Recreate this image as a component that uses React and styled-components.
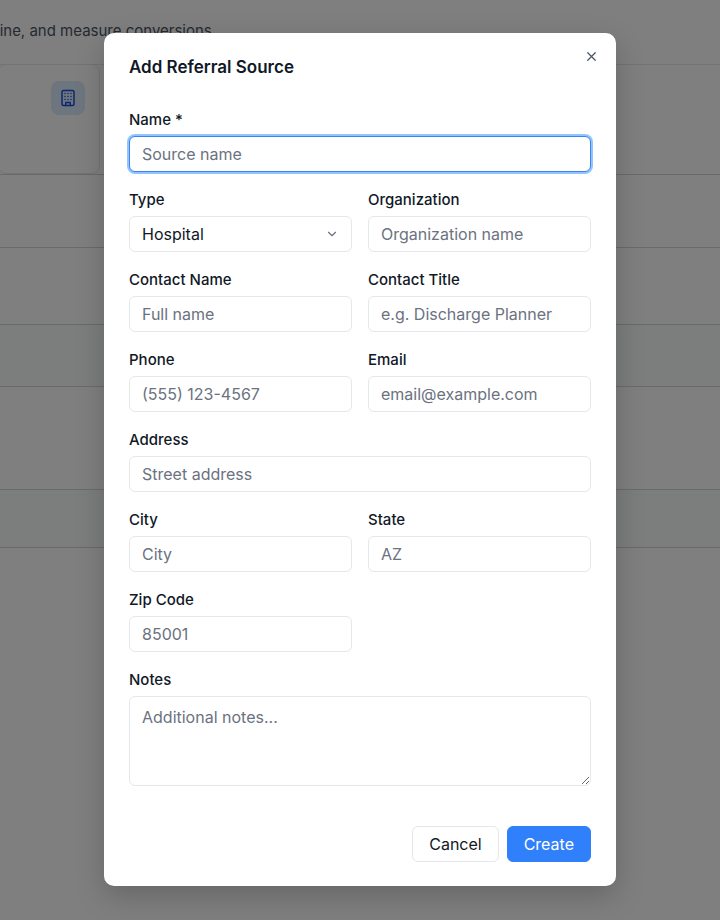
import React from "react"
import styled, { createGlobalStyle } from "styled-components"

const Global = createGlobalStyle`
  html, body { margin: 0; padding: 0; }
  body { font-family: Inter, "Noto Sans", sans-serif; background: #fff; width: 720px; height: 920px; overflow: hidden; }
`

const Page = styled.div`
  position: relative;
  width: 720px;
  height: 920px;
  background: #fff;
`

const Subtitle = styled.div`
  padding: 21px 0 0 0;
  margin-left: -4px;
  font-size: 15px;
  color: #4b5563;
  height: 65px;
  box-sizing: border-box;
  border-bottom: 1px solid #e5e7eb;
`

const BgRow = styled.div`
  height: ${(p) => p.$h}px;
  border-top: 1px solid #d1d5db;
  background: ${(p) => (p.$shade ? "#f9fafb" : "#fff")};
  box-sizing: border-box;
`

const BgCard = styled.div`
  width: 100px;
  height: 108px;
  margin-left: -2px;
  margin-top: -1px;
  border: 1px solid #e5e7eb;
  border-radius: 8px;
  position: relative;
`

const IconBox = styled.div`
  position: absolute;
  left: 52px;
  top: 16px;
  width: 34px;
  height: 34px;
  border-radius: 8px;
  background: #dbeafe;
  display: flex;
  align-items: center;
  justify-content: center;
  color: #1d4ed8;
`

const Overlay = styled.div`
  position: absolute;
  inset: 0;
  background: rgba(0, 0, 0, 0.5);
`

const Modal = styled.div`
  position: absolute;
  left: 104px;
  top: 33px;
  width: 512px;
  box-sizing: border-box;
  background: #fff;
  border-radius: 10px;
  padding: 24px 25px;
  box-shadow: 0 10px 30px rgba(0, 0, 0, 0.2);
`

const Title = styled.h2`
  margin: 0;
  font-size: 17px;
  font-weight: 600;
  color: #111827;
  line-height: 20px;
`

const Close = styled.button`
  position: absolute;
  right: 17px;
  top: 16px;
  background: none;
  border: none;
  padding: 0;
  color: #4b5563;
  display: flex;
`

const Form = styled.div`
  display: grid;
  grid-template-columns: minmax(0, 1fr) minmax(0, 1fr);
  column-gap: 16px;
  row-gap: 18px;
  margin-top: 33px;
`

const Field = styled.div`
  display: flex;
  flex-direction: column;
  gap: 6px;
  min-width: 0;
  grid-column: ${(p) => (p.$wide ? "1 / span 2" : "auto")};
`

const Label = styled.label`
  font-size: 15px;
  font-weight: 450;
  color: #111827;
  line-height: 20px;
`

const Input = styled.input`
  width: 100%;
  height: 36px;
  box-sizing: border-box;
  border: 1px solid ${(p) => (p.$focus ? "#3b82f6" : "#e5e7eb")};
  box-shadow: ${(p) => (p.$focus ? "0 0 0 2px #93c5fd" : "none")};
  border-radius: 6px;
  padding: 0 12px;
  font-family: inherit;
  font-size: 16px;
  color: #111827;
  outline: none;
  &::placeholder { color: #6b7280; }
`

const SelectBox = styled.div`
  height: 36px;
  box-sizing: border-box;
  border: 1px solid #e5e7eb;
  border-radius: 6px;
  padding: 0 12px;
  display: flex;
  align-items: center;
  justify-content: space-between;
  font-size: 16px;
  color: #111827;
`

const TextArea = styled.textarea`
  width: 100%;
  height: 90px;
  box-sizing: border-box;
  border: 1px solid #e5e7eb;
  border-radius: 6px;
  padding: 10px 12px;
  font-family: inherit;
  font-size: 16px;
  resize: vertical;
  outline: none;
  &::placeholder { color: #6b7280; }
`

const Footer = styled.div`
  display: flex;
  justify-content: flex-end;
  gap: 8px;
  margin-top: 40px;
`

const Button = styled.button`
  height: 36px;
  box-sizing: border-box;
  padding: 0 16px;
  border-radius: 6px;
  font-family: inherit;
  font-size: 16px;
  border: 1px solid ${(p) => (p.$primary ? "#2f80fa" : "#e5e7eb")};
  background: ${(p) => (p.$primary ? "#2f80fa" : "#fff")};
  color: ${(p) => (p.$primary ? "#fff" : "#111827")};
`

const Building = () => (
  <svg width="18" height="18" viewBox="0 0 24 24" fill="none" stroke="currentColor" strokeWidth="2" strokeLinecap="round" strokeLinejoin="round">
    <rect x="4" y="2" width="16" height="20" rx="2" />
    <path d="M9 22v-4h6v4M8 6h.01M16 6h.01M12 6h.01M12 10h.01M12 14h.01M16 10h.01M16 14h.01M8 10h.01M8 14h.01" />
  </svg>
)

const App = () => (
  <Page>
    <Global />
    <Subtitle>line, and measure conversions</Subtitle>
    <BgCard>
      <IconBox><Building /></IconBox>
    </BgCard>
    <BgRow $h={73} />
    <BgRow $h={77} />
    <BgRow $h={62} $shade />
    <BgRow $h={103} />
    <BgRow $h={58} $shade />
    <BgRow $h={370} />
    <Overlay />
    <Modal>
      <Close>
        <svg width="15" height="15" viewBox="0 0 24 24" fill="none" stroke="currentColor" strokeWidth="2" strokeLinecap="round">
          <path d="M18 6 6 18M6 6l12 12" />
        </svg>
      </Close>
      <Title>Add Referral Source</Title>
      <Form>
        <Field $wide>
          <Label>Name *</Label>
          <Input $focus placeholder="Source name" />
        </Field>
        <Field>
          <Label>Type</Label>
          <SelectBox>
            Hospital
            <svg width="14" height="14" viewBox="0 0 24 24" fill="none" stroke="#6b7280" strokeWidth="2" strokeLinecap="round" strokeLinejoin="round">
              <path d="m6 9 6 6 6-6" />
            </svg>
          </SelectBox>
        </Field>
        <Field>
          <Label>Organization</Label>
          <Input placeholder="Organization name" />
        </Field>
        <Field>
          <Label>Contact Name</Label>
          <Input placeholder="Full name" />
        </Field>
        <Field>
          <Label>Contact Title</Label>
          <Input placeholder="e.g. Discharge Planner" />
        </Field>
        <Field>
          <Label>Phone</Label>
          <Input placeholder="(555) 123-4567" />
        </Field>
        <Field>
          <Label>Email</Label>
          <Input placeholder="email@example.com" />
        </Field>
        <Field $wide>
          <Label>Address</Label>
          <Input placeholder="Street address" />
        </Field>
        <Field>
          <Label>City</Label>
          <Input placeholder="City" />
        </Field>
        <Field>
          <Label>State</Label>
          <Input placeholder="AZ" />
        </Field>
        <Field>
          <Label>Zip Code</Label>
          <Input placeholder="85001" />
        </Field>
        <div />
        <Field $wide>
          <Label>Notes</Label>
          <TextArea placeholder="Additional notes..." />
        </Field>
      </Form>
      <Footer>
        <Button>Cancel</Button>
        <Button $primary>Create</Button>
      </Footer>
    </Modal>
  </Page>
)

export default App
